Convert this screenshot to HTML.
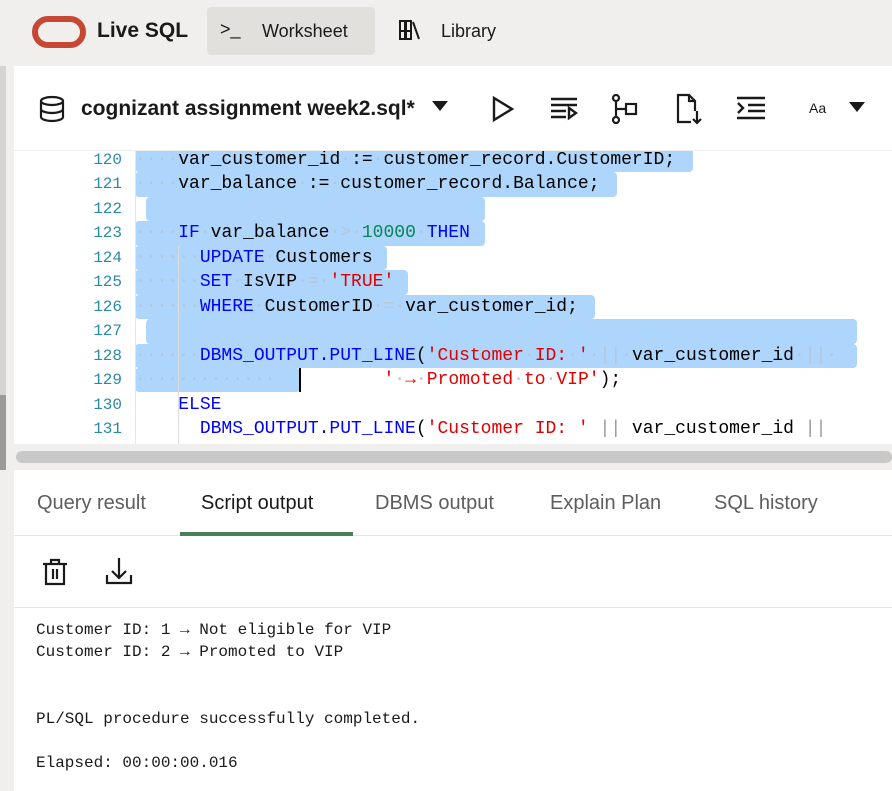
<!DOCTYPE html>
<html><head><meta charset="utf-8"><style>
*{margin:0;padding:0;box-sizing:border-box}
body{width:892px;height:791px;overflow:hidden;background:#f1efed;font-family:"Liberation Sans",sans-serif;position:relative}
.abs{position:absolute}
.code{font-family:"Liberation Mono",monospace;font-size:18px;color:#000;white-space:pre;line-height:24.45px}
.ln{position:absolute;left:46px;width:62px;text-align:right;font-family:"Liberation Mono",monospace;font-size:16px;color:#2b8aa6;line-height:24.45px}
.sel{position:absolute;background:#aed5fb;height:24.45px;border-radius:4px}
.k{color:#0000ff}.s{color:#e00000}.n{color:#098658}.d{color:#b4c6d8}
.tab{position:absolute;top:492px;font-size:20px;color:#5d5d5d}
.out{position:absolute;left:36px;font-family:"Liberation Mono",monospace;font-size:16px;color:#1a1a1a}
</style></head><body>
<div class="abs" style="left:32px;top:16px;width:54px;height:32px;border:6px solid #c74634;border-radius:16px"></div>
<div class="abs" style="left:97px;top:19px;font-size:21px;font-weight:bold;color:#1a1a1a">Live SQL</div>
<div class="abs" style="left:207px;top:7px;width:168px;height:48px;background:#e2e0dd;border-radius:4px"></div>
<div class="abs" style="left:220px;top:19px;font-size:18px;color:#1a1a1a">&gt;_</div>
<div class="abs" style="left:262px;top:21px;font-size:18px;color:#1a1a1a">Worksheet</div>
<svg class="abs" style="left:398px;top:19px" width="26" height="22" viewBox="0 0 26 22" fill="none" stroke="#1a1a1a" stroke-width="2"><rect x="2" y="2" width="5" height="18"/><rect x="8" y="2" width="5" height="18"/><path d="M15 3l6 17"/><path d="M2 12h11"/></svg>
<div class="abs" style="left:441px;top:21px;font-size:18px;color:#1a1a1a">Library</div>
<div class="abs" style="left:0;top:66px;width:6px;height:330px;background:#d6d4d2"></div>
<div class="abs" style="left:0;top:395px;width:6px;height:75px;background:#9a9a9a"></div>
<div class="abs" style="left:14px;top:66px;width:878px;height:725px;background:#fff"></div>
<svg class="abs" style="left:38px;top:95px" width="28" height="28" viewBox="0 0 28 28" fill="none" stroke="#1a1a1a" stroke-width="2.2"><ellipse cx="14" cy="6" rx="11" ry="4"/><path d="M3 6v16c0 2.2 5 4 11 4s11-1.8 11-4V6M3 14c0 2.2 5 4 11 4s11-1.8 11-4"/></svg>
<div class="abs" style="left:81px;top:97px;font-size:21px;font-weight:bold;color:#1a1a1a">cognizant assignment week2.sql*</div>
<div class="abs" style="left:432px;top:101px;border-left:8px solid transparent;border-right:8px solid transparent;border-top:10px solid #1a1a1a"></div>
<svg class="abs" style="left:490px;top:95px" width="26" height="28"><path d="M4 3L22 14L4 25Z" fill="none" stroke="#1a1a1a" stroke-width="2.4"/></svg>
<svg class="abs" style="left:550px;top:96px" width="28" height="26" stroke="#1a1a1a" stroke-width="2.4" fill="none"><path d="M1 3h26M1 9h26M1 15h15M1 21h15"/><path d="M19 12l7 5-7 5z"/></svg>
<svg class="abs" style="left:611px;top:94px" width="28" height="30" stroke="#1a1a1a" stroke-width="2.2" fill="none"><circle cx="5" cy="4" r="3"/><circle cx="5" cy="26" r="3"/><path d="M5 7v16M5 15h10"/><rect x="15" y="10" width="10" height="10"/></svg>
<svg class="abs" style="left:675px;top:93px" width="28" height="32" stroke="#1a1a1a" stroke-width="2.2" fill="none"><path d="M16 29H3V2h11l6 6v10"/><path d="M14 2v6h6"/><path d="M22 18v12M18 26l4 4 4-4"/></svg>
<svg class="abs" style="left:736px;top:96px" width="30" height="24" stroke="#1a1a1a" stroke-width="2.4" fill="none"><path d="M1 2h28M12 9h17M12 15h17M1 22h28M2 7l5 5-5 5"/></svg>
<div class="abs" style="left:809px;top:100px;font-size:14px;color:#1a1a1a">Aa</div>
<div class="abs" style="left:849px;top:102px;border-left:8px solid transparent;border-right:8px solid transparent;border-top:10px solid #1a1a1a"></div>
<div class="abs" style="left:14px;top:150px;width:878px;height:294px;overflow:hidden;background:#fff;border-top:1px solid #eee">
<div style="position:absolute;left:121px;top:-3px">
<div class="sel" style="left:0;top:0;width:558px"></div>
<div class="sel" style="left:0;top:24.45px;width:482px"></div>
<div class="sel" style="left:11px;top:48.9px;width:339px"></div>
<div class="sel" style="left:0;top:73.35px;width:350px"></div>
<div class="sel" style="left:0;top:97.8px;width:252px"></div>
<div class="sel" style="left:0;top:122.25px;width:273px"></div>
<div class="sel" style="left:0;top:146.7px;width:460px"></div>
<div class="sel" style="left:11px;top:171.15px;width:711px"></div>
<div class="sel" style="left:0;top:195.6px;width:722px"></div>
<div class="sel" style="left:0;top:220.05px;width:165px"></div>
<div style="position:absolute;left:43px;top:98px;width:1px;height:200px;background:#ddd"></div>
<div class="code" style="position:absolute;left:0;top:0"><span class="d">····</span>var_customer_id<span class="d">·</span>:=<span class="d">·</span>customer_record.CustomerID;
<span class="d">····</span>var_balance<span class="d">·</span>:=<span class="d">·</span>customer_record.Balance;

<span class="d">····</span><span class="k">IF</span><span class="d">·</span>var_balance<span class="d">·&gt;·</span><span class="n">10000</span><span class="d">·</span><span class="k">THEN</span>
<span class="d">······</span><span class="k">UPDATE</span><span class="d">·</span>Customers
<span class="d">······</span><span class="k">SET</span><span class="d">·</span>IsVIP<span class="d">·=·</span><span class="s">'TRUE'</span>
<span class="d">······</span><span class="k">WHERE</span><span class="d">·</span>CustomerID<span class="d">·=·</span>var_customer_id;

<span class="d">······</span><span class="k">DBMS_OUTPUT.PUT_LINE</span>(<span class="s">'Customer<span class="d">·</span>ID:<span class="d">·</span>'</span><span class="d">·||·</span>var_customer_id<span class="d">·||·</span>
<span class="d">·············</span>          <span class="s">'<span class="d">·</span>→<span class="d">·</span>Promoted<span class="d">·</span>to<span class="d">·</span>VIP'</span>);
    <span class="k">ELSE</span>
      <span class="k">DBMS_OUTPUT.PUT_LINE</span>(<span class="s">'Customer ID: '</span> <span style="color:#999">||</span> var_customer_id <span style="color:#999">||</span></div>
<div style="position:absolute;left:164px;top:220px;width:2px;height:24px;background:#000"></div>
</div>
<div class="ln" style="top:-3px">120<br>121<br>122<br>123<br>124<br>125<br>126<br>127<br>128<br>129<br>130<br>131</div>
<div style="position:absolute;left:121px;top:0;width:1px;height:294px;background:#e6e6e6"></div>
</div>
<div class="abs" style="left:14px;top:444px;width:878px;height:26px;background:#f1efed"></div>
<div class="abs" style="left:16px;top:451px;width:876px;height:12px;background:#c8c8c8;border-radius:6px"></div>
<div class="tab" style="left:37px">Query result</div>
<div class="tab" style="left:201px;color:#1a1a1a">Script output</div>
<div class="tab" style="left:375px">DBMS output</div>
<div class="tab" style="left:550px">Explain Plan</div>
<div class="tab" style="left:714px">SQL history</div>
<div class="abs" style="left:14px;top:535px;width:878px;height:1px;background:#e4e4e4"></div>
<div class="abs" style="left:180px;top:532px;width:173px;height:4px;background:#4b7f5a"></div>
<svg class="abs" style="left:42px;top:558px" width="26" height="28" stroke="#1a1a1a" stroke-width="2.2" fill="none"><path d="M1 6h24M9 6V2h8v4M4 6v20h18V6M11 11v10M15 11v10"/></svg>
<svg class="abs" style="left:105px;top:557px" width="28" height="28" stroke="#1a1a1a" stroke-width="2.2" fill="none"><path d="M14 1v20M7 14l7 7 7-7M2 18v8h24v-8"/></svg>
<div class="abs" style="left:14px;top:607px;width:878px;height:1px;background:#e4e4e4"></div>
<div class="out" style="top:621px">Customer ID: 1 → Not eligible for VIP</div>
<div class="out" style="top:643px">Customer ID: 2 → Promoted to VIP</div>
<div class="out" style="top:710px">PL/SQL procedure successfully completed.</div>
<div class="out" style="top:754px">Elapsed: 00:00:00.016</div>
</body></html>
